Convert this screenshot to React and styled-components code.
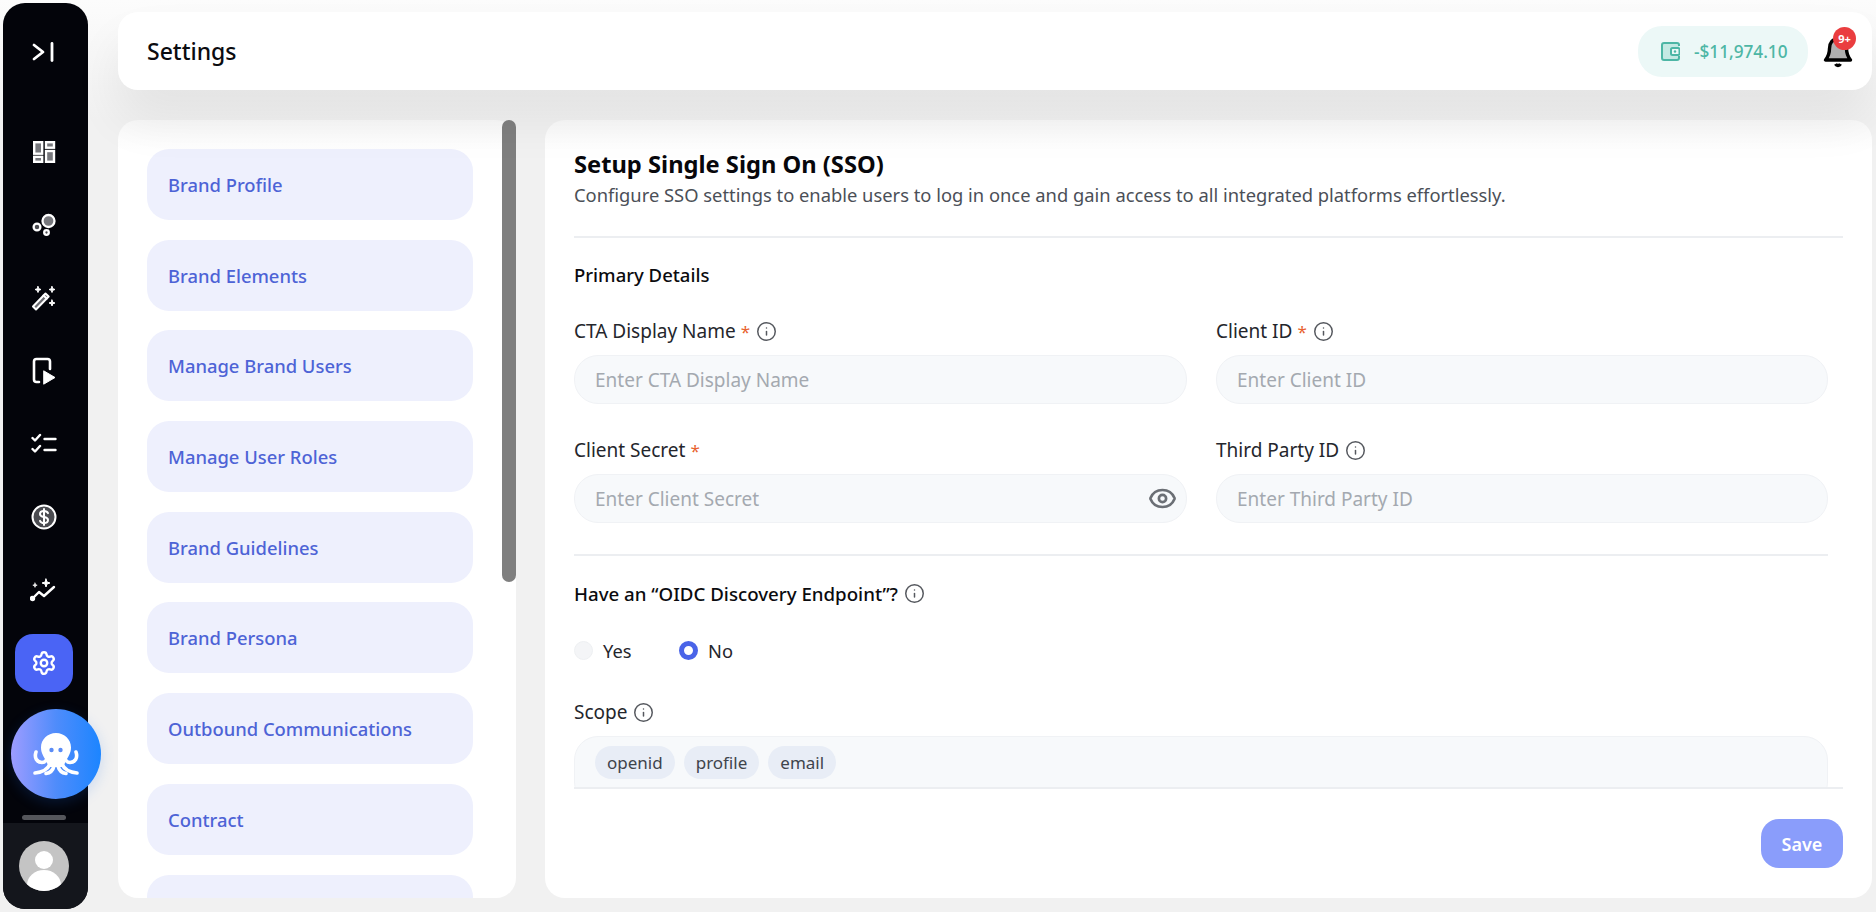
import React from "react";
import styled, { createGlobalStyle } from "styled-components";
import { Settings, Info, Eye } from "lucide-react";

const GlobalStyle = createGlobalStyle`
  * {
    box-sizing: border-box;
  }
  html,
  body {
    margin: 0;
    height: 100%;
    overflow: hidden;
    background: linear-gradient(#fcfcfc 0, #f1f1f1 120px);
    font-family: "Noto Sans", "Liberation Sans", sans-serif;
  }
`;

const Page = styled.div`
  display: flex;
  height: 912px;
  padding: 3px 4px 3px 3px;
`;

const Sidebar = styled.aside`
  position: relative;
  flex: 0 0 85px;
  display: flex;
  flex-direction: column;
  background: #03040a;
  border-radius: 22px;
`;

const Collapse = styled.div`
  height: 97px;
  padding-right: 3px;
  display: flex;
  align-items: center;
  justify-content: center;
  color: #fff;
`;

const Nav = styled.nav`
  flex: 1;
  display: flex;
  flex-direction: column;
  align-items: center;
  padding: 23px 3px 0 0;
`;

const NavItem = styled.div`
  flex: 0 0 58px;
  width: 58px;
  margin-bottom: 15px;
  display: flex;
  align-items: center;
  justify-content: center;
  border-radius: 18px;
  color: #fff;
  background: ${(p) => (p.$active ? "#4a64f5" : "transparent")};
`;

const Assistant = styled.div`
  position: absolute;
  left: 8px;
  top: 706px;
  width: 90px;
  height: 90px;
  border-radius: 50%;
  display: flex;
  align-items: center;
  justify-content: center;
  background: linear-gradient(90deg, #9d9cff 0%, #4f8cfb 50%, #1c85ff 100%);
  box-shadow: 0 4px 14px rgba(30, 110, 240, 0.18);
`;

const Handle = styled.div`
  align-self: center;
  width: 44px;
  height: 5px;
  margin: 0 3px 3px 0;
  border-radius: 3px;
  background: #55565b;
`;

const SidebarFoot = styled.div`
  height: 86px;
  padding-right: 3px;
  display: flex;
  align-items: center;
  justify-content: center;
  background: #14161c;
  border-radius: 0 0 22px 22px;
`;

const Avatar = styled.div`
  width: 50px;
  height: 50px;
  border-radius: 50%;
  overflow: hidden;
  background: #c4c4c4;
`;

const Main = styled.div`
  flex: 1;
  min-width: 0;
  display: flex;
  flex-direction: column;
  padding: 9px 0 11px 30px;
`;

const Header = styled.header`
  position: relative;
  z-index: 2;
  flex: 0 0 78px;
  display: flex;
  align-items: center;
  justify-content: space-between;
  padding: 0 16px 0 29px;
  background: #fff;
  border-radius: 20px;
  box-shadow: 0 30px 50px rgba(0, 0, 0, 0.065);
`;

const PageTitle = styled.h1`
  margin: 0;
  font-size: 23px;
  font-weight: 500;
  color: #0b0b0f;
`;

const HeaderRight = styled.div`
  display: flex;
  align-items: center;
  gap: 12px;
`;

const Balance = styled.div`
  width: 170px;
  height: 51px;
  display: flex;
  align-items: center;
  gap: 14px;
  padding-left: 23px;
  border-radius: 24px;
  background: #ecf8f7;
  color: #4db6a5;
  font-size: 17.2px;
  font-weight: 500;
`;

const Bell = styled.div`
  position: relative;
  width: 36px;
  height: 36px;
`;

const Badge = styled.span`
  position: absolute;
  top: -6px;
  left: 13px;
  width: 23px;
  height: 23px;
  border-radius: 50%;
  display: flex;
  align-items: center;
  justify-content: center;
  background: #ea3d3f;
  color: #fff;
  font-size: 11px;
  font-weight: 700;
`;

const Content = styled.div`
  flex: 1;
  min-height: 0;
  display: flex;
  gap: 29px;
  margin-top: 30px;
`;

const MenuPanel = styled.div`
  position: relative;
  flex: 0 0 398px;
  background: linear-gradient(#f9f9f9, #fff 30px);
  border-radius: 20px;
`;

const MenuClip = styled.div`
  height: 100%;
  padding: 29px 0 0 29px;
  border-radius: 20px;
  overflow: hidden;
`;

const ScrollThumb = styled.div`
  position: absolute;
  top: 0;
  right: 0;
  width: 14px;
  height: 462px;
  border-radius: 7px;
  background: #7f7f7f;
`;

const MenuList = styled.div`
  display: flex;
  flex-direction: column;
  gap: 19.7px;
  width: 326px;
`;

const MenuItem = styled.a`
  flex: 0 0 71px;
  display: flex;
  align-items: center;
  padding-left: 21px;
  border-radius: 22px;
  background: #eef0fd;
  color: #4d63d6;
  font-size: 18.4px;
  font-weight: 500;
`;

const FormPanel = styled.section`
  flex: 1;
  min-width: 0;
  display: flex;
  flex-direction: column;
  padding: 29px 29px 30px;
  background: linear-gradient(#f9f9f9, #fff 30px);
  border-radius: 20px;
`;

const Heading = styled.h2`
  margin: 0 0 2px;
  font-size: 23.7px;
  line-height: 30px;
  font-weight: 700;
  color: #07070b;
`;

const Subheading = styled.p`
  margin: 0;
  padding-bottom: 27px;
  font-size: 18.35px;
  line-height: 28px;
  color: #4b4f57;
  border-bottom: 2px solid #eceef1;
`;

const FormScroll = styled.div`
  flex: 1;
  min-height: 0;
  overflow: hidden;
  padding-right: 15px;
`;

const SectionTitle = styled.h3`
  margin: 23px 0 0;
  font-size: 18.5px;
  line-height: 28px;
  font-weight: 500;
  color: #0b0b0f;
`;

const Grid = styled.div`
  display: grid;
  grid-template-columns: 613px 612px;
  column-gap: 29px;
  row-gap: 32px;
  margin-top: 28px;
  padding-bottom: 31px;
  border-bottom: 2px solid #eceef1;
`;

const Field = styled.div`
  display: flex;
  flex-direction: column;
  gap: 10px;
`;

const Label = styled.div`
  display: flex;
  align-items: center;
  gap: 6px;
  height: 28px;
  font-size: ${(p) => (p.$strong ? "18.7px" : "19px")};
  color: ${(p) => (p.$strong ? "#0b0b0f" : "#24262c")};
  font-weight: ${(p) => (p.$strong ? 500 : 400)};
`;

const Required = styled.span`
  margin-left: -1px;
  font-size: 17px;
  color: #e8622f;
`;

const InputWrap = styled.div`
  position: relative;
  height: 49px;
`;

const Input = styled.input`
  width: 100%;
  height: 100%;
  padding: 0 20px;
  border: 1.5px solid #f0f2f5;
  border-radius: 24px;
  background: #f7f9fb;
  outline: none;
  font-family: inherit;
  font-size: 19px;

  &::placeholder {
    color: #a4a9b0;
    opacity: 1;
  }
`;

const InputIcon = styled.span`
  position: absolute;
  right: 10px;
  top: 10px;
  display: flex;
  color: #6b6f75;
`;

const Question = styled(Label)`
  margin-top: 23px;
`;

const RadioRow = styled.div`
  display: flex;
  margin-top: 29px;
`;

const RadioOption = styled.label`
  display: flex;
  align-items: center;
  gap: 10px;
  width: 105px;
  height: 28px;
  font-size: 18.3px;
  color: #24262c;
`;

const RadioDot = styled.span`
  width: 19px;
  height: 19px;
  border-radius: 50%;
  background: ${(p) => (p.$checked ? "#fff" : "#f4f5f7")};
  border: ${(p) => (p.$checked ? "5px solid #4a64e8" : "1px solid #eef0f2")};
`;

const ScopeField = styled(Field)`
  margin-top: 34px;
`;

const ScopeBox = styled.div`
  display: flex;
  align-items: flex-start;
  gap: 9px;
  height: 70px;
  padding: 9px 20px;
  border: 1.5px solid #f0f2f5;
  border-radius: 24px;
  background: #f7f9fb;
`;

const Chip = styled.span`
  display: flex;
  align-items: center;
  height: 33px;
  padding: 0 12px;
  border-radius: 17px;
  background: #e8edf6;
  color: #3f444c;
  font-size: 17px;
`;

const FormFoot = styled.div`
  display: flex;
  justify-content: flex-end;
  padding-top: 30px;
  border-top: 2px solid #eceef1;
`;

const SaveButton = styled.button`
  width: 82px;
  height: 49px;
  border: none;
  border-radius: 18px;
  background: #8a9dfb;
  color: #fff;
  font-family: inherit;
  font-size: 18px;
  font-weight: 600;
`;

const iconProps = {
  fill: "none",
  stroke: "currentColor",
  strokeWidth: 2,
  strokeLinecap: "round",
  strokeLinejoin: "round",
};

const CollapseIcon = () => (
  <svg width="24" height="24" viewBox="0 0 24 24" {...iconProps} strokeWidth="2.8">
    <path d="M2 5l9 7-9 7" />
    <path d="M20 3.500v17" />
  </svg>
);

const DashboardIcon = () => (
  <svg width="24" height="24" viewBox="0 0 24 24" {...iconProps} strokeWidth="2.400" strokeLinejoin="miter" strokeLinecap="butt">
    <rect x="2.200" y="2.200" width="8" height="11.500" fill="#77787d" />
    <rect x="14" y="2.200" width="8" height="5.500" fill="#77787d" />
    <rect x="2.200" y="16.800" width="8" height="5" fill="#77787d" />
    <rect x="14" y="11" width="8" height="10.800" fill="#77787d" />
  </svg>
);

const BubblesIcon = () => (
  <svg width="24" height="24" viewBox="0 0 24 24" {...iconProps} strokeWidth="2.300">
    <circle cx="16.500" cy="8" r="6" fill="#77787d" />
    <circle cx="5" cy="14" r="3.400" fill="#4b4c51" />
    <circle cx="14.500" cy="19.500" r="2.300" fill="#4b4c51" />
  </svg>
);

const WandIcon = () => (
  <svg width="26" height="26" viewBox="0 0 26 26" {...iconProps}>
    <path d="M2 21.500L14.500 8.500l3.200 3L5 24.500z" fill="#6d6e73" />
    <path d="M12.500 10.500l3.200 3" />
    <path d="M7 1.500l.8 2.200 2.200.8-2.200.8L7 7.500l-.8-2.200-2.200-.8 2.200-.8z" fill="#fff" strokeWidth="1" />
    <path d="M21 1.500l.8 2.200 2.200.8-2.200.8-.8 2.200-.8-2.200-2.200-.8 2.200-.8z" fill="#fff" strokeWidth="1" />
    <path d="M21 15l.8 2.200 2.200.8-2.200.8-.8 2.200-.8-2.200-2.200-.8 2.200-.8z" fill="#fff" strokeWidth="1" />
  </svg>
);

const ReelIcon = () => (
  <svg width="24" height="28" viewBox="0 0 24 28" {...iconProps} strokeWidth="2.600">
    <path d="M7 25H4.500A2.500 2.500 0 0 1 2 22.500V4.500A2.500 2.500 0 0 1 4.500 2h11A2.500 2.500 0 0 1 18 4.500V12" />
    <path d="M12 14l11 6.500L12 27z" fill="#fff" strokeWidth="1" />
  </svg>
);

const ChecklistIcon = () => (
  <svg width="26" height="22" viewBox="0 0 26 22" {...iconProps} strokeWidth="2.400">
    <path d="M1.500 5l2.500 2.500L9 2" />
    <path d="M1.500 16l2.500 2.500L9 13" />
    <path d="M13.500 6h11" />
    <path d="M13.500 17h11" />
  </svg>
);

const DollarIcon = () => (
  <svg width="26" height="26" viewBox="0 0 26 26" {...iconProps}>
    <circle cx="13" cy="13" r="11.500" fill="#4b4c51" />
    <path d="M17 9.200c-.6-1.400-2-2.200-4-2.200-2.400 0-4 1.200-4 3s1.600 2.600 4 3 4 1.200 4 3-1.600 3-4 3c-2 0-3.400-.8-4-2.200" />
    <path d="M13 5v16" />
  </svg>
);

const TrendIcon = () => (
  <svg width="28" height="24" viewBox="0 0 28 24" {...iconProps} strokeWidth="2.400">
    <path d="M2 21l7-7 5 4 10-9" />
    <circle cx="2.500" cy="20.500" r="1.500" fill="#fff" />
    <path d="M16 1l1 3 3 1-3 1-1 3-1-3-3-1 3-1z" fill="#fff" strokeWidth="1" />
    <path d="M5 5l.6 1.600 1.600.6-1.600.6L5 9.400l-.6-1.600-1.600-.6 1.600-.6z" fill="#fff" strokeWidth="0.600" />
  </svg>
);

const OctopusIcon = () => (
  <svg width="46" height="43" viewBox="0 0 46 43">
    <path d="M23 0C31.500 0 38 6.500 38 14.500C38 20 35.500 23 33.500 27L30 34L16 34L12.500 27C10.500 23 8 20 8 14.500C8 6.500 14.500 0 23 0z" fill="#fff" />
    <circle cx="18.500" cy="17" r="2.200" fill="#5b8cf6" />
    <circle cx="27.500" cy="17" r="2.200" fill="#5b8cf6" />
    <g fill="none" stroke="#fff" strokeWidth="3.600" strokeLinecap="round">
      <path d="M3 19C1 25 4 29.500 9 29.500C11 29.500 13 28 14 26" />
      <path d="M43 19C45 25 42 29.500 37 29.500C35 29.500 33 28 32 26" />
      <path d="M17 31C15 36 9 39.500 2 40" />
      <path d="M29 31C31 36 37 39.500 44 40" />
      <path d="M21 33C20 37 17 40 13 40.500" />
      <path d="M25 33C26 37 29 40 33 40.500" />
    </g>
  </svg>
);

const AvatarIcon = () => (
  <svg width="50" height="50" viewBox="0 0 50 50">
    <circle cx="25" cy="19" r="9" fill="#fff" />
    <ellipse cx="25" cy="44" rx="17" ry="15" fill="#fff" />
  </svg>
);

const WalletIcon = () => (
  <svg width="19" height="19" viewBox="0 0 19 19" fill="none" stroke="currentColor" strokeWidth="2">
    <path d="M18 4V3a2 2 0 0 0-2-2H3a2 2 0 0 0-2 2v13a2 2 0 0 0 2 2h13a2 2 0 0 0 2-2v-2" fill="#c4e9e3" />
    <rect x="10" y="6" width="8.500" height="7" rx="1.500" fill="#ecf8f7" />
    <circle cx="14" cy="9.500" r="1.200" fill="currentColor" stroke="none" />
  </svg>
);

const BellIcon = () => (
  <svg width="36" height="36" viewBox="0 0 36 36" fill="#b0b0b0" stroke="#000" strokeWidth="3.400" strokeLinejoin="round">
    <path d="M18 6c-5.500 0-8.500 4-8.500 9.500 0 5-1.600 8.500-4 11.500h25c-2.400-3-4-6.500-4-11.500C26.500 10 23.500 6 18 6z" />
    <path d="M15.500 31c.6 1 1.400 1.500 2.500 1.500s1.900-.5 2.500-1.500" fill="none" />
  </svg>
);

const menuItems = [
  "Brand Profile",
  "Brand Elements",
  "Manage Brand Users",
  "Manage User Roles",
  "Brand Guidelines",
  "Brand Persona",
  "Outbound Communications",
  "Contract",
  "",
];

const navIcons = [
  DashboardIcon,
  BubblesIcon,
  WandIcon,
  ReelIcon,
  ChecklistIcon,
  DollarIcon,
  TrendIcon,
];

const InfoIcon = () => <Info size={21} strokeWidth={1.7} color="#55585e" />;

const App = () => {
  return (
    <>
      <GlobalStyle />
      <Page>
        <Sidebar>
          <Collapse>
            <CollapseIcon />
          </Collapse>
          <Nav>
            {navIcons.map((Icon, i) => (
              <NavItem key={i}>
                <Icon />
              </NavItem>
            ))}
            <NavItem $active>
              <Settings size={26} strokeWidth={2.2} />
            </NavItem>
          </Nav>
          <Assistant>
            <OctopusIcon />
          </Assistant>
          <Handle />
          <SidebarFoot>
            <Avatar>
              <AvatarIcon />
            </Avatar>
          </SidebarFoot>
        </Sidebar>

        <Main>
          <Header>
            <PageTitle>Settings</PageTitle>
            <HeaderRight>
              <Balance>
                <WalletIcon />
                -$11,974.10
              </Balance>
              <Bell>
                <BellIcon />
                <Badge>9+</Badge>
              </Bell>
            </HeaderRight>
          </Header>

          <Content>
            <MenuPanel>
              <MenuClip>
                <MenuList>
                  {menuItems.map((item, i) => (
                    <MenuItem key={i}>{item}</MenuItem>
                  ))}
                </MenuList>
              </MenuClip>
              <ScrollThumb />
            </MenuPanel>

            <FormPanel>
              <Heading>Setup Single Sign On (SSO)</Heading>
              <Subheading>
                Configure SSO settings to enable users to log in once and gain
                access to all integrated platforms effortlessly.
              </Subheading>
              <FormScroll>
                <SectionTitle>Primary Details</SectionTitle>
                <Grid>
                  <Field>
                    <Label>
                      <span>CTA Display Name</span>
                      <Required>*</Required>
                      <InfoIcon />
                    </Label>
                    <InputWrap>
                      <Input placeholder="Enter CTA Display Name" />
                    </InputWrap>
                  </Field>
                  <Field>
                    <Label>
                      <span>Client ID</span>
                      <Required>*</Required>
                      <InfoIcon />
                    </Label>
                    <InputWrap>
                      <Input placeholder="Enter Client ID" />
                    </InputWrap>
                  </Field>
                  <Field>
                    <Label>
                      <span>Client Secret</span>
                      <Required>*</Required>
                    </Label>
                    <InputWrap>
                      <Input placeholder="Enter Client Secret" />
                      <InputIcon>
                        <Eye size={29} strokeWidth={2.2} />
                      </InputIcon>
                    </InputWrap>
                  </Field>
                  <Field>
                    <Label>
                      <span>Third Party ID</span>
                      <InfoIcon />
                    </Label>
                    <InputWrap>
                      <Input placeholder="Enter Third Party ID" />
                    </InputWrap>
                  </Field>
                </Grid>

                <Question $strong>
                  <span>Have an “OIDC Discovery Endpoint”?</span>
                  <InfoIcon />
                </Question>
                <RadioRow>
                  <RadioOption>
                    <RadioDot />
                    Yes
                  </RadioOption>
                  <RadioOption>
                    <RadioDot $checked />
                    No
                  </RadioOption>
                </RadioRow>
                <ScopeField>
                  <Label>
                    <span>Scope</span>
                    <InfoIcon />
                  </Label>
                  <ScopeBox>
                    <Chip>openid</Chip>
                    <Chip>profile</Chip>
                    <Chip>email</Chip>
                  </ScopeBox>
                </ScopeField>
              </FormScroll>
              <FormFoot>
                <SaveButton>Save</SaveButton>
              </FormFoot>
            </FormPanel>
          </Content>
        </Main>
      </Page>
    </>
  );
};

export default App;
